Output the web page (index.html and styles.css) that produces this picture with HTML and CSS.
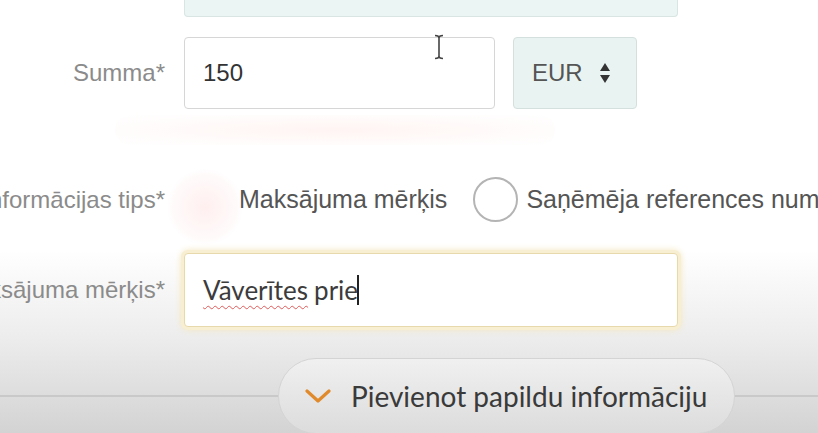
FILE: index.html
```html
<!DOCTYPE html>
<html lang="lv">

<head>
  <meta charset="UTF-8" />
  <meta name="viewport" content="width=device-width, initial-scale=1.0" />
  <title>Maksājums</title>
  <link rel="stylesheet" href="styles.css">
</head>

<body>
  <form class="payment">
    <div class="top-field"></div>

    <div class="row">
      <label class="label">Summa*</label>
      <div class="field">
        <div class="input amount">150</div>
        <div class="select">
          <span>EUR</span>
          <svg class="arrows" width="12" height="22" viewBox="0 0 12 22">
            <polygon points="6,1 11,9 1,9" fill="#333" />
            <polygon points="1,13 11,13 6,21" fill="#333" />
          </svg>
        </div>
        <svg class="ibeam" width="14" height="26" viewBox="0 0 14 26">
          <path d="M3 1.5 Q7 1.5 7 4 Q7 1.5 11 1.5 M7 4 V22 M3 24.5 Q7 24.5 7 22 Q7 24.5 11 24.5" fill="none" stroke="#444" stroke-width="1.6" />
        </svg>
      </div>
    </div>

    <div class="error-glow"></div>

    <div class="row radios">
      <label class="label">Informācijas tips*</label>
      <div class="field">
        <span class="radio checked"></span>
        <span class="option">Maksājuma mērķis</span>
        <span class="radio"></span>
        <span class="option">Saņēmēja references numurs</span>
      </div>
    </div>

    <div class="row purpose">
      <label class="label">Maksājuma mērķis*</label>
      <div class="field">
        <div class="input focused"><span class="misspelled">Vāverītes</span> prie<span class="caret"></span></div>
      </div>
    </div>

    <div class="more">
      <button type="button" class="more-btn">
        <svg width="26" height="16" viewBox="0 0 26 16">
          <polyline points="2,3 13,13 24,3" fill="none" stroke="#e08a2c" stroke-width="3.2" stroke-linecap="round" stroke-linejoin="round" />
        </svg>
        Pievienot papildu informāciju
      </button>
    </div>
  </form>
</body>

</html>
```

FILE: styles.css
```css
body,
html {
  height: 100%;
  overflow: hidden;
}

body {
  margin: 0;
  font-family: "Liberation Sans", Arial, sans-serif;
  background: linear-gradient(to bottom, #ffffff 0, #ffffff 250px, #ececec 340px, #d3d3d3 433px);
}

.payment {
  display: flex;
  flex-direction: column;
}

.top-field {
  margin-left: 184px;
  width: 492px;
  height: 16px;
  background: #ebf5f3;
  border: 1px solid #d9e5e3;
  border-top: none;
  border-radius: 0 0 4px 4px;
}

.row {
  display: grid;
  grid-template-columns: 165px 1fr;
  column-gap: 19px;
  align-items: center;
  margin-top: 20px;
  height: 72px;
}

.label {
  display: flex;
  justify-content: flex-end;
  white-space: nowrap;
  font-size: 24px;
  color: #8b8b8b;
}

.field {
  display: flex;
  align-items: center;
  height: 100%;
  position: relative;
  white-space: nowrap;
}

.input {
  box-sizing: border-box;
  height: 100%;
  display: flex;
  align-items: center;
  padding-left: 18px;
  background: #fff;
  border: 1px solid #d6d6d6;
  border-radius: 4px;
  font-size: 24px;
  color: #333;
}

.amount {
  width: 311px;
}

.select {
  box-sizing: border-box;
  width: 124px;
  height: 100%;
  margin-left: 18px;
  display: flex;
  align-items: center;
  gap: 16px;
  padding-left: 18px;
  background: #e9f4f2;
  border: 1px solid #d4e0de;
  border-radius: 4px;
  font-size: 24px;
  color: #555;
}

.ibeam {
  position: absolute;
  left: 248px;
  top: -3px;
}

.error-glow {
  margin: 6px 0 0 115px;
  width: 440px;
  height: 30px;
  border-radius: 15px;
  background: radial-gradient(ellipse at center, rgba(255, 220, 215, 0.3), rgba(255, 235, 230, 0.12) 70%, rgba(255, 255, 255, 0));
}

.radios {
  margin-top: 24px;
  height: 60px;
}

.radio {
  box-sizing: border-box;
  flex: none;
  width: 45px;
  height: 45px;
  border-radius: 50%;
  border: 2px solid #b4b4b4;
  background: #fff;
  margin-right: 8px;
}

.radio.checked {
  border: none;
  background: radial-gradient(circle, rgba(255, 215, 215, 0.4), rgba(255, 230, 230, 0.18) 60%, rgba(255, 255, 255, 0) 72%);
  width: 76px;
  height: 76px;
  margin-left: -17px;
  margin-right: -4px;
  align-self: flex-end;
  margin-bottom: -15px;
}

.option {
  font-size: 25px;
  color: #555;
  margin-right: 26px;
}

.purpose {
  margin-top: 24px;
  height: 74px;
}

.focused {
  width: 494px;
  border: 1px solid #e8d9ad;
  box-shadow: 0 0 0 3px #f8efd2, 0 0 6px 3px #f3e7c2;
  font-family: Lato, "Open Sans", sans-serif;
  font-size: 26px;
  color: #3c3c3c;
}

.misspelled {
  text-decoration: underline wavy #e05a5a;
  text-decoration-thickness: 1px;
  text-underline-offset: 5px;
  margin-right: 6px;
}

.caret {
  display: inline-block;
  width: 2px;
  height: 30px;
  background: #222;
  margin-left: -1px;
}

.more {
  margin-top: 31px;
  height: 76px;
  padding-left: 278px;
  background: linear-gradient(to bottom, transparent 37px, #c9c9c9 37px, #c9c9c9 39px, transparent 39px);
}

.more-btn {
  box-sizing: border-box;
  width: 457px;
  height: 76px;
  display: flex;
  align-items: center;
  gap: 20px;
  padding-left: 26px;
  border: 1px solid #d4d4d4;
  border-radius: 38px;
  background: linear-gradient(to bottom, #f0f0f0, #dcdcdc);
  font-family: Lato, "Open Sans", sans-serif;
  font-size: 28px;
  color: #3a3a3a;
}
```
